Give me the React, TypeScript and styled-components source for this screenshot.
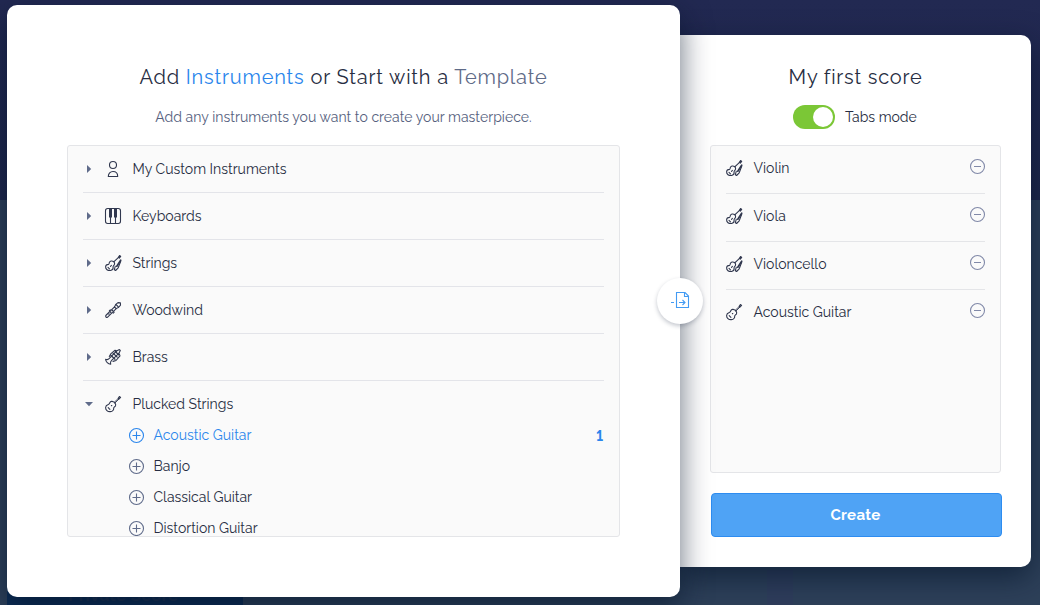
import React from "react";
import styled, { createGlobalStyle } from "styled-components";

const GlobalStyle = createGlobalStyle`
  *, *::before, *::after { box-sizing: border-box; }
  body {
    margin: 0;
    overflow: hidden;
    font-family: Raleway, Lato, "Open Sans", sans-serif;
    font-variant-numeric: lining-nums;
    font-size: 14px;
    color: #272d42;
    background: #2d4059;
  }
`;

const Stage = styled.main`
  position: relative;
  display: flex;
  align-items: flex-start;
  height: 605px;
  padding: 5px 9px 0 7px;
  background: linear-gradient(#222952 0, #1e264b 200px, #2d4059 200px);
`;

const Backdrop = styled.div`
  position: absolute;
  left: 0;
  right: 0;
  bottom: 0;
  display: flex;
  height: 35px;
  padding-left: 7px;
`;

const ScoreCard = styled.div`
  display: flex;
  align-items: flex-end;
  width: 236px;
  padding: 0 0 0 61px;
  background: #0d2d55;
  color: #1d3354;
  font-size: 17px;
  line-height: 19px;
  font-weight: 700;
  letter-spacing: 0.2px;
`;

const Column = styled.div<{ $offset: number; $width: number }>`
  margin-left: ${(p) => p.$offset}px;
  width: ${(p) => p.$width}px;
  background: #2e3d5b;
`;

const Panel = styled.section`
  position: relative;
  border-radius: 10px;
  background: #fff;
  box-shadow: 0 10px 30px rgba(0, 16, 38, 0.6);
`;

const PickerPanel = styled(Panel)`
  z-index: 1;
  width: 673px;
  height: 592px;
  padding: 56px 60px 0;
`;

const ScorePanel = styled(Panel)`
  width: 351px;
  height: 532px;
  margin-top: 30px;
  padding: 26px 29px 0 30px;
  border-radius: 0 10px 10px 0;
`;

const Txt = styled.span`
  white-space: nowrap;
`;

const Heading = styled.h1`
  margin: 0;
  height: 32px;
  line-height: 32px;
  text-align: center;
  font-size: 20px;
  font-weight: 400;
  letter-spacing: 0.8px;
  white-space: nowrap;
`;

const ScoreTitle = styled(Heading)`
  padding-right: 1px;
  letter-spacing: 0.75px;
`;

const Choice = styled.span<{ $active?: boolean }>`
  color: ${(p) => (p.$active ? "#2b86ec" : "#5f6b88")};
`;

const Intro = styled.p`
  margin: 14px 0 18px;
  height: 20px;
  line-height: 20px;
  text-align: center;
  letter-spacing: 0.03px;
  color: #56617e;
`;

const ListBox = styled.div<{ $height: number }>`
  height: ${(p) => p.$height}px;
  padding: 0 15px;
  overflow: hidden;
  border: 1px solid #e4e5e8;
  border-radius: 3px;
  background: #fafafa;
`;

const ScoreList = styled(ListBox)`
  width: 291px;
`;

const FamilyRow = styled.div<{ $open?: boolean }>`
  display: flex;
  align-items: center;
  height: ${(p) => (p.$open ? 39 : 47)}px;
  padding: ${(p) => (p.$open ? "14px 0 7px 1px" : "0 0 0 1px")};
  border-bottom: ${(p) => (p.$open ? "none" : "1px solid #e3e4e9")};
`;

const Caret = styled.svg`
  width: 10px;
  height: 10px;
  margin-right: 11px;
  fill: #5f6b8a;
`;

const Glyph = styled.svg`
  flex: none;
  width: 16px;
  height: 16px;
  margin-right: 11.5px;
  overflow: visible;
  fill: none;
  stroke: #31384f;
  stroke-width: 1.1;
  stroke-linecap: round;
  stroke-linejoin: round;
`;

const InstrumentRow = styled.div<{ $active?: boolean }>`
  display: flex;
  align-items: center;
  height: 31px;
  padding-left: 46px;
  color: ${(p) => (p.$active ? "#2b86ec" : "inherit")};
`;

const RoundSign = styled.svg<{ $color: string }>`
  flex: none;
  width: 15px;
  height: 15px;
  overflow: visible;
  fill: none;
  stroke: ${(p) => p.$color};
  stroke-width: 1.1;
`;

const InstrumentName = styled(Txt)`
  flex: 1;
  margin-left: 9.5px;
  padding-bottom: 1px;
`;

const Count = styled.b`
  margin-right: 1px;
  font-size: 14px;
`;

const ModeRow = styled.div`
  display: flex;
  align-items: center;
  height: 24px;
  margin: 12px 0 16px 53px;
`;

const Toggle = styled.span`
  display: flex;
  justify-content: flex-end;
  align-items: center;
  width: 42px;
  height: 24px;
  margin: 0 10px 0 30px;
  padding-right: 2px;
  border-radius: 12px;
  background: #7bc736;
`;

const Knob = styled.span`
  width: 20px;
  height: 20px;
  border-radius: 50%;
  background: #fff;
`;

const ScoreRow = styled.div`
  display: flex;
  align-items: center;
  height: 48px;
  padding-bottom: 3px;
  border-bottom: 1px solid #e4e5e8;
  &:last-child { border-bottom-color: transparent; }
`;

const RemoveSign = styled(RoundSign)`
  margin-bottom: 3px;
  margin-left: auto;
`;

const CreateButton = styled.button`
  display: block;
  width: 291px;
  height: 44px;
  margin: 20px 0 0 1px;
  padding: 0 2px 0 0;
  border: 1px solid #2d8cf0;
  border-radius: 4px;
  background: #4fa3f5;
  color: #fff;
  font: inherit;
  font-size: 15px;
  font-weight: 700;
  letter-spacing: 0.3px;
`;

const ExportBadge = styled.button`
  position: absolute;
  right: -23px;
  top: 273px;
  display: grid;
  place-items: center;
  width: 46px;
  height: 46px;
  padding: 0;
  border: 0;
  border-radius: 50%;
  background: #fff;
  box-shadow: 0 2px 4px rgba(20, 30, 60, 0.25);
`;

type Kind = "person" | "keys" | "strings" | "wood" | "brass" | "guitar";

const drawings: Record<Kind, React.ReactNode> = {
  person: (
    <>
      <circle cx="8" cy="4" r="3.5" />
      <path d="M3.300 15.500c0-3 2-5 4.700-5s4.700 2 4.700 5z" />
    </>
  ),
  keys: (
    <>
      <rect x=".5" y=".5" width="15" height="15" rx="2.200" />
      <path d="M5.500 9v6.300M10.500 9v6.300" />
      <path d="M4 .8h3v8.700H4zM9 .8h3v8.700H9z" fill="#31384f" stroke="none" />
    </>
  ),
  strings: (
    <>
      <path d="M.6 11.800c.1-1.700 1.500-2.400 2.900-2.400.8-.2.600-1 .8-1.800.5-1.600 2.700-2.200 4.200-1.100 1.400 1.100 1.400 2.700.4 3.800-.7.700-1.100 1-.8 2 .2 1.500-.9 2.900-2.600 3.200-2.700.4-5-1.300-4.900-3.700z" />
      <path d="M9.300 6.300l4.200-4M3 12.400l1.500 1.500M5.500 11.300l.9-.9" />
      <path d="M13.400 2.400l1.200-1.900 1.100.9-1.400 1.700z" fill="#31384f" />
      <path d="M15.700 5.200l-3.900 6" strokeWidth="1.700" />
      <path d="M10.300 11.200l-1 3.600 1.300.7 2.600-2.700 2.500-6.600" />
    </>
  ),
  wood: (
    <>
      <path d="M.8 13.500l8.700-8.600 1.700 1.700-8.800 8.700c-1 .5-2.200-.7-1.600-1.800z" />
      <path d="M9.500 4.900c.2-.8 1-1.200 1-2.200L13 .6l2.400.3.100 2.200-2 2.400c-.9 0-1.500.8-2.300 1.100M11.500 3l1.600 1.600" />
      <path d="M7.500 8.400h.1M5.700 10.200h.1M3.900 12h.1" strokeWidth="1.500" />
      <path d="M4.300 8.900l1-1M8.200 11.100l1-1" />
    </>
  ),
  brass: (
    <>
      <path d="M.6 10.200c1.300.7 2.800.3 4-1l7-7.200 2.800-1.400.9.900-1.500 2.900-7.200 7c-1.200 1.200-1.500 2.400-.9 3.900C3.200 15.300.7 12.800.6 10.200z" />
      <path d="M4.300 7.500l1.400-2.600 4.400-3.700 1.500.8M8 12.400l3-.9 4-4.600-.7-1.900" />
      <path d="M5.800 6.200l4.200 4M8 4.100l4.200 4M10.300 2.500l3.300 3.300" strokeWidth="1.300" />
    </>
  ),
  guitar: (
    <>
      <path d="M.6 11.500c.1-1.900 1.400-2.600 2.700-3 1.300-.4 1.300-1.200 1.600-2 .7-1.300 2.400-1.500 3.700-.6 1.900 1.300 2.600 2.900 1.700 4.200-.7.900-1.500 1-1.600 2 .1 1.900-1.300 3.300-3.400 3.500-2.700.2-4.800-1.600-4.700-4.100z" />
      <path d="M9.300 6.300l4-3.900M10 7l3.900-3.900" strokeWidth=".9" />
      <path d="M3.200 11.700l1.700 1.700M6.400 9.600h.4" />
      <path d="M13.200 2.300l1.200-1.800 1.200.9-1.700 1.700z" />
    </>
  ),
};

const InstrumentIcon = ({ kind }: { kind: Kind }) => (
  <Glyph viewBox="0 0 16 16">{drawings[kind]}</Glyph>
);

const families: { name: string; kind: Kind }[] = [
  { name: "My Custom Instruments", kind: "person" },
  { name: "Keyboards", kind: "keys" },
  { name: "Strings", kind: "strings" },
  { name: "Woodwind", kind: "wood" },
  { name: "Brass", kind: "brass" },
  { name: "Plucked Strings", kind: "guitar" },
];

const plucked = [
  { name: "Acoustic Guitar", count: 1 },
  { name: "Banjo", count: 0 },
  { name: "Classical Guitar", count: 0 },
  { name: "Distortion Guitar", count: 0 },
];

const score: { name: string; kind: Kind }[] = [
  { name: "Violin", kind: "strings" },
  { name: "Viola", kind: "strings" },
  { name: "Violoncello", kind: "strings" },
  { name: "Acoustic Guitar", kind: "guitar" },
];

export default function App() {
  return (
    <>
      <GlobalStyle />
      <Stage>
        <Backdrop>
          <ScoreCard>Private Score</ScoreCard>
          <Column $offset={524} $width={26} />
        </Backdrop>
        <PickerPanel>
          <Heading>
            Add <Choice $active>Instruments</Choice> or Start with a <Choice>Template</Choice>
          </Heading>
          <Intro>Add any instruments you want to create your masterpiece.</Intro>
          <ListBox $height={392}>
            {families.map((f) => {
              const open = f.name === "Plucked Strings";
              return (
                <FamilyRow key={f.name} $open={open}>
                  <Caret viewBox="0 0 10 10">
                    <path d={open ? "M1 3h8L5 7.200z" : "M3 1v8l4.200-4z"} />
                  </Caret>
                  <InstrumentIcon kind={f.kind} />
                  <Txt>{f.name}</Txt>
                </FamilyRow>
              );
            })}
            {plucked.map((p) => (
              <InstrumentRow key={p.name} $active={p.count > 0}>
                <RoundSign viewBox="0 0 15 15" $color={p.count ? "#2b86ec" : "#5f6b8a"}>
                  <circle cx="7.500" cy="7.500" r="7" />
                  <path d="M3.500 7.500h8M7.500 3.500v8" />
                </RoundSign>
                <InstrumentName>{p.name}</InstrumentName>
                {p.count > 0 && <Count>{p.count}</Count>}
              </InstrumentRow>
            ))}
          </ListBox>
          <ExportBadge aria-label="Export">
            <svg width="20" height="18" viewBox="0 0 20 18" fill="none" stroke="#439bf3" strokeWidth="1.100">
              <path d="M6.500 .5h8.500l3.500 3.500v11.500h-12zM14.500 .8v3.700h3.800M1 10.500h3M9 10.500h6M12.500 8l2.500 2.500-2.500 2.500" />
            </svg>
          </ExportBadge>
        </PickerPanel>
        <ScorePanel>
          <ScoreTitle>My first score</ScoreTitle>
          <ModeRow>
            <Toggle>
              <Knob />
            </Toggle>
            <Txt>Tabs mode</Txt>
          </ModeRow>
          <ScoreList $height={328}>
            {score.map((s) => (
              <ScoreRow key={s.name}>
                <InstrumentIcon kind={s.kind} />
                <Txt>{s.name}</Txt>
                <RemoveSign viewBox="0 0 15 15" $color="#8189a8">
                  <circle cx="7.500" cy="7.500" r="7" />
                  <path d="M4 7.500h7" />
                </RemoveSign>
              </ScoreRow>
            ))}
          </ScoreList>
          <CreateButton>Create</CreateButton>
        </ScorePanel>
      </Stage>
    </>
  );
}
